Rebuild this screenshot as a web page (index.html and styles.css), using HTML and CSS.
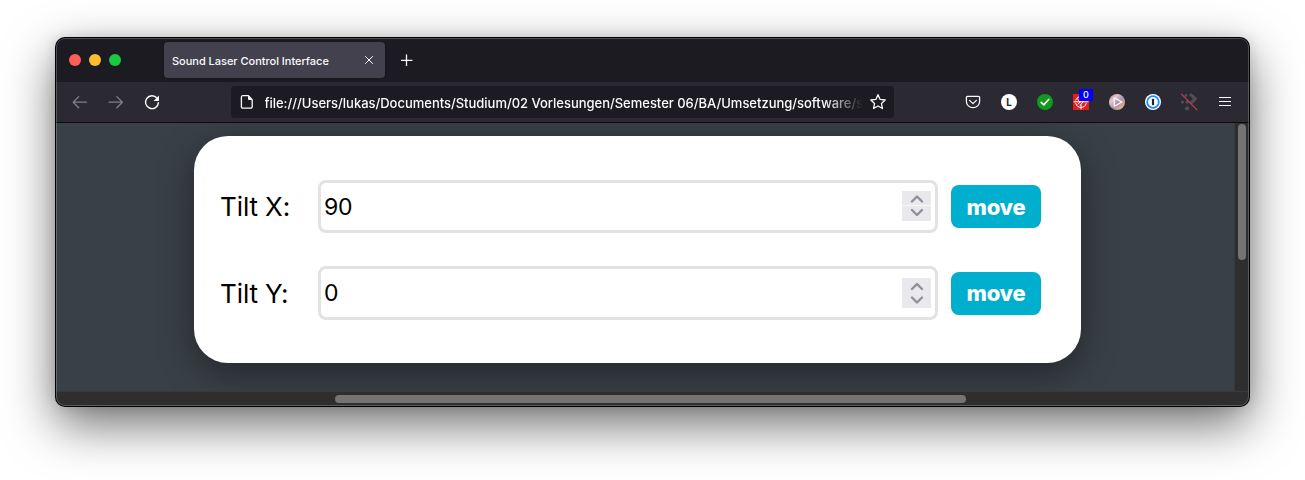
FILE: index.html
```html
<!DOCTYPE html>
<html lang="en">
<head>
<meta charset="utf-8">
<title>Sound Laser Control Interface</title>
<link rel="stylesheet" href="styles.css">
</head>
<body>
<div class="window">
  <div class="tabbar">
    <div class="lights"><i class="light red"></i><i class="light yellow"></i><i class="light green"></i></div>
    <div class="tab"><span class="tab-title">Sound Laser Control Interface</span>
      <svg class="close" width="8" height="8" viewBox="0 0 8 8"><path d="M.5 .5l7 7M7.5 .5l-7 7"/></svg>
    </div>
    <svg class="plus" width="12" height="12" viewBox="0 0 12 12"><path d="M5.5 .8v11M.2 6.3h10.8"/></svg>
  </div>
  <div class="navbar">
    <div class="nav-buttons">
      <svg class="dim" width="16" height="16" viewBox="0 0 16 16"><path d="M14.5 8.2H1.2M6.7 2.6L1.2 8.2l5.5 5.6"/></svg>
      <svg class="dim" width="16" height="16" viewBox="0 0 16 16"><path d="M1 8.2h13.4M8.8 2.6l5.6 5.6-5.6 5.6"/></svg>
      <svg width="16" height="16" viewBox="0 0 16 16"><path d="M13 4.2A6.4 6.4 0 1 0 14.4 8.6" class="reload"/><path class="fill" d="M15 1.6v4.7c0 .4-.3.7-.7.7H9.6z"/></svg>
    </div>
    <div class="urlbar">
      <svg class="page-icon" width="14" height="16" viewBox="0 0 14 16"><path d="M2.8 1.7h5.6l3.8 3.9v7.2a1.4 1.4 0 0 1-1.4 1.4h-8a1.4 1.4 0 0 1-1.4-1.4V3.1a1.4 1.4 0 0 1 1.4-1.4z"/><path class="fill" d="M8 1.7l4.2 4.3H9a1 1 0 0 1-1-1z"/></svg>
      <span class="url">file:///Users/lukas/Documents/Studium/02 Vorlesungen/Semester 06/BA/Umsetzung/software/s</span>
      <svg class="star" width="18" height="18" viewBox="0 0 18 18"><path d="M9 1.7l2.15 4.7 5.05.6-3.75 3.45 1 5.1L9 13l-4.45 2.55 1-5.1L1.8 7l5.05-.6z"/></svg>
    </div>
    <div class="extensions">
      <svg width="16" height="16" viewBox="0 0 16 16"><path d="M2.6 2.4h10.8a1.2 1.2 0 0 1 1.2 1.2v3.9a6.6 6.2 0 0 1-13.2 0V3.6a1.2 1.2 0 0 1 1.2-1.2z"/><path d="M4.6 6.4L8 9.6l3.4-3.2"/></svg>
      <span class="avatar">L</span>
      <svg width="16" height="16" viewBox="0 0 16 16"><circle cx="8" cy="8" r="8" fill="#12991f" stroke="none"/><path d="M4.2 8.4l2.6 2.5 5.1-5.6" class="thick"/></svg>
      <span class="blocker">
        <svg width="16" height="16" viewBox="0 0 16 16"><path d="M0 0h16v16H0z" fill="#e21d1d" stroke="none"/><path d="M1 7.8h14M2.8 9.5a5.4 5.4 0 0 0 10.4 0M2.8 6a5.4 5.4 0 0 1 3-3.2M8 1v5M8 11v4M5 10.3l3.8-4M7.2 11.2l4-4.6M4.6 5.2l2 2" class="mark"/></svg>
        <b class="badge">0</b>
      </span>
      <svg width="16" height="16" viewBox="0 0 16 16">
        <defs><linearGradient id="play" x1="0" y1="0" x2="1" y2="1"><stop offset="0" stop-color="#7b7fd0"/><stop offset=".3" stop-color="#eec6bc"/><stop offset=".55" stop-color="#a392b7"/><stop offset=".8" stop-color="#e5a58c"/><stop offset="1" stop-color="#fff0b6"/></linearGradient></defs>
        <circle cx="8" cy="8" r="8" fill="url(#play)" stroke="none"/><path d="M5.2 3.8v8.4L13 8z"/></svg>
      <svg width="16" height="16" viewBox="0 0 16 16"><circle cx="8" cy="8" r="8" fill="#fff" stroke="none"/><circle cx="8" cy="8" r="5.8" fill="#fff" stroke="#1a8cff" stroke-width="1.8"/><rect x="6.9" y="4.8" width="2.2" height="6.4" rx=".7" fill="#1a2338" stroke="none"/></svg>
      <svg width="18" height="18" viewBox="0 0 18 18"><g fill="#504f56" stroke="none"><circle cx="6" cy="2.5" r="1.4"/><circle cx="2.5" cy="9" r="1.6"/><circle cx="7.2" cy="9" r="1.7"/><circle cx="7" cy="15.5" r="2.1"/></g><path d="M11 2l4.4 3.7-3.8 3.6" stroke="#504f56" stroke-width="3"/><path d="M1.5 1.2l15.5 15.7" stroke="#d63a50" stroke-width="1.1"/></svg>
      <svg class="menu" width="12" height="10" viewBox="0 0 12 10"><path d="M0 0h12v1H0zM0 4h12v1H0zM0 8h12v1H0z"/></svg>
    </div>
  </div>
  <div class="viewport">
    <main class="page">
      <section class="card">
        <div class="row">
          <span class="label">Tilt X:</span>
          <div class="field"><span class="value">90</span><span class="spinner split"><svg width="14" height="26" viewBox="0 0 14 26"><path d="M2 8.5l5-5 5 5M2 17l5 5 5-5"/></svg></span></div>
          <button class="move">move</button>
        </div>
        <div class="row">
          <span class="label">Tilt Y:</span>
          <div class="field"><span class="value">0</span><span class="spinner"><svg width="14" height="26" viewBox="0 0 14 26"><path d="M2 9l5-5 5 5M2 17.5l5 5 5-5"/></svg></span></div>
          <button class="move">move</button>
        </div>
      </section>
    </main>
    <div class="vscroll"><i class="vthumb"></i></div>
    <div class="hscroll"><i class="hthumb"></i></div>
  </div>
</div>
</body>
</html>
```

FILE: styles.css
```css
* { box-sizing: border-box; }
body { margin: 0; width: 1305px; height: 480px; overflow: hidden; background: #fff; padding: 38px 56px; font-family: Inter, "Liberation Sans", sans-serif; }
svg { display: block; flex: none; fill: none; stroke: #fbfbfe; stroke-width: 1.3; stroke-linecap: round; stroke-linejoin: round; }
.window { position: relative; width: 1193px; height: 368px; border-radius: 9px; overflow: hidden; display: flex; flex-direction: column; background: #1c1b22; }
.window::after { content: ""; position: absolute; inset: 0; border-radius: 9px; box-shadow: inset 0 0 0 1px rgba(255,255,255,.22); pointer-events: none; }
.window { box-shadow: 0 0 0 1px #000, 0 18px 50px rgba(0,0,0,.58), 0 0 14px rgba(0,0,0,.15); }
.tabbar { height: 44px; flex: none; display: flex; align-items: center; padding-left: 13px; }
.lights { display: flex; gap: 8px; }
.light { width: 12px; height: 12px; border-radius: 50%; }
.red { background: #ff5f57; }
.yellow { background: #febc2e; }
.green { background: #1ac943; }
.tab { margin-left: 43px; width: 221px; height: 36px; border-radius: 4px; background: #42414d; display: flex; align-items: center; justify-content: space-between; padding: 0 12px 0 8px; box-shadow: 0 0 3px rgba(0,0,0,.3); }
.tab-title { font-size: 11px; font-weight: 500; letter-spacing: -.02px; color: #fbfbfe; white-space: nowrap; padding-top: 2px; }
.close { stroke-width: 1; }
.plus { margin-left: 16px; }
.navbar { height: 41px; flex: none; display: flex; align-items: center; background: #2b2a33; border-bottom: 1px solid #0c0c0d; }
.nav-buttons { display: flex; gap: 20px; padding-left: 16px; }
.dim { opacity: .4; }
.fill { fill: #fbfbfe; stroke: none; }
.reload { stroke-width: 1.4; }
.urlbar { margin-left: 71px; width: 663px; height: 32px; border-radius: 4px; background: #1c1b22; display: flex; align-items: center; padding: 0 7px 0 9px; }
.url { width: 598px; margin-left: 10.5px; overflow: hidden; white-space: nowrap; font-size: 13px; font-weight: 550; letter-spacing: -.02px; color: #fbfbfe; line-height: 20px; padding-top: 1px; -webkit-mask-image: linear-gradient(to left, transparent, #000 38px); mask-image: linear-gradient(to left, transparent, #000 38px); }
.star { margin-left: 6.5px; }
.extensions { display: flex; align-items: center; gap: 20px; margin-left: 71px; }
.avatar { width: 16px; height: 16px; border-radius: 50%; background: #fff; color: #222; font-size: 10px; font-weight: 700; line-height: 16px; text-align: center; }
.thick { stroke-width: 1.6; }
.mark { stroke-width: 1; }
.blocker { position: relative; }
.badge { position: absolute; left: 6px; top: -5px; width: 14px; height: 12px; border-radius: 1px; background: #0000f5; color: #fff; font-size: 9px; font-weight: 500; line-height: 12px; text-align: center; }
.extensions svg[width="18"] { margin: 0 -1px; }
.menu { margin-left: 2px; fill: #fbfbfe; stroke: none; }
.viewport { flex: 1; display: grid; grid-template-columns: 1178px 15px; grid-template-rows: 268px 15px; background: #2e2e2e; }
.page { overflow: hidden; background: #394047; padding: 13px 0 0 138px; }
.card { width: 887px; height: 227px; border-radius: 34px; background: #fff; box-shadow: 0 10px 36px rgba(0,0,0,.4); padding: 44px 40px 0 26px; display: flex; flex-direction: column; gap: 33px; color: #000; }
.row { display: flex; align-items: center; height: 53px; }
.row + .row { height: 54px; }
.label { width: 98px; font-size: 26px; letter-spacing: -.1px; white-space: nowrap; }
.field { width: 620px; height: 100%; border: 3px solid #e2e2e2; border-radius: 8px; display: flex; align-items: center; justify-content: space-between; padding: 0 4px 0 3px; }
.value { font-size: 23px; letter-spacing: -.3px; }
.spinner { width: 29px; height: 30px; background: #e9e8ed; display: grid; place-items: center; }
.spinner svg { stroke: #8f8f9d; stroke-width: 2.4; }
.split { margin-bottom: 1px; background: linear-gradient(#e9e8ed 14px, #f8f8fa 14px, #f8f8fa 15px, #e9e8ed 15px); }
.move { margin-left: 13px; width: 90px; height: 43px; padding: 0; border: 0; border-radius: 8px; background: #00aece; color: #fff; font: 800 22px Inter, "Liberation Sans", sans-serif; letter-spacing: -.3px; }
.vscroll { padding: 1px 0 0 3px; border-left: 1px solid #363a3d; }
.vthumb { display: block; width: 8px; height: 136px; border-radius: 4px; background: #747474; }
.hscroll { grid-column: 1 / 3; border-top: 1px solid #363a3d; padding: 3px 0 0 279px; }
.hthumb { display: block; width: 631px; height: 8px; border-radius: 4px; background: #747474; }
```
